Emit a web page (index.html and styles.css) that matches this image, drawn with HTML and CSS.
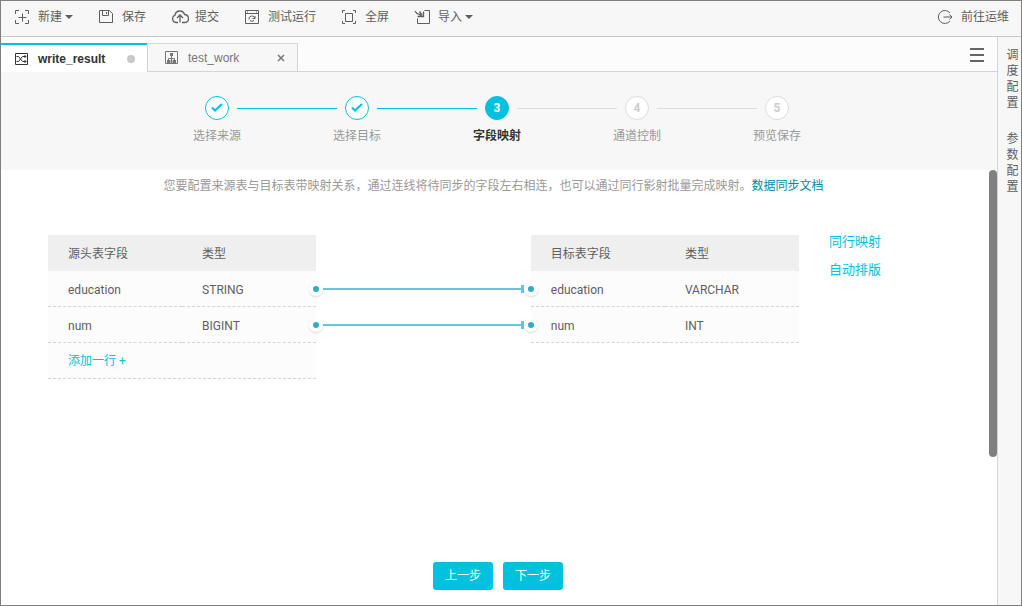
FILE: index.html
```html
<!DOCTYPE html>
<html lang="zh-CN">
<head>
    <meta charset="UTF-8">
    <meta name="viewport" content="width=device-width, initial-scale=1.0">
    <title>write_result</title>
    <link rel="stylesheet" href="styles.css">
</head>
<body>
    <div class="app">
        <header class="toolbar">
            <button class="tool" type="button">
                <svg class="icon" width="16" height="16" viewBox="0 0 16 16"><path d="M5 1.5H1.5V5M11 1.5h3.500V5M5 14.500H1.500V11M11 14.500h3.500V11M8.500 4.500v8M4.500 8.500h8"/></svg>
                <span>新建</span><i class="caret"></i>
            </button>
            <button class="tool" type="button">
                <svg class="icon" width="16" height="16" viewBox="0 0 16 16"><path d="M1.500 1.500h10l3 3v9h-13zM4.500 1.500v5h6v-5M8.500 3v2"/></svg>
                <span>保存</span>
            </button>
            <button class="tool" type="button">
                <svg class="icon icon-wide" width="18" height="16" viewBox="0 0 18 16"><path d="M7 13.500H5A3.800 3.800 0 0 1 4 6.200C4.300 3.500 6.500 2 8.900 2c2.200 0 4 1.300 4.600 3.500 2.500.3 4 1.900 4 4s-1.500 4-4 4H11M9 13.500V6.500M6 9l3-3 3 3" stroke-width="1.300"/></svg>
                <span>提交</span>
            </button>
            <button class="tool" type="button">
                <svg class="icon" width="16" height="16" viewBox="0 0 16 16"><path d="M1.500 1.500h13v13h-13zM1.500 4.500h13M3 3h1M12 3h1M5 10.500a3 3 0 0 1 6-1M11 7v2.500H8.500M6 11.500c1 1 3 1 4 0"/></svg>
                <span>测试运行</span>
            </button>
            <button class="tool" type="button">
                <svg class="icon" width="16" height="16" viewBox="0 0 16 16"><path d="M4 1.500H1.500V4M12 1.500h2.500V4M4 14.500H1.500V12M12 14.500h2.500V12M4.500 4.500h7v8h-7z"/></svg>
                <span>全屏</span>
            </button>
            <button class="tool" type="button">
                <svg class="icon" width="16" height="16" viewBox="0 0 16 16"><path d="M10.500 1.500h5v13h-12V9.500"/><path d="M1 2c1 2 2 3 4 3.200L8 7M9.500 2.500V7.500H3.500M5.500 2.500L8 6" stroke-width="1.300"/></svg>
                <span>导入</span><i class="caret"></i>
            </button>
            <a class="tool tool-right" href="#ops">
                <svg class="icon" width="16" height="16" viewBox="0 0 16 16"><path d="M13 4a6.500 6.500 0 1 0 0 8M6.500 8h8.500M12.500 5.500L15 8l-2.500 2.500"/></svg>
                <span>前往运维</span>
            </a>
        </header>

        <div class="workspace">
            <main class="main">
                <nav class="tabs">
                    <a class="tab active" href="#write_result">
                        <svg class="tab-icon" width="14" height="14" viewBox="0 0 14 14"><path d="M.5 1.500h12v11H.5z"/><path d="M1.500 4.500h2l4 5H11M1.500 9.500h2l4-5H11M9.500 3l1.500 1.500L9.500 6M9.500 8L11 9.500 9.500 11"/></svg>
                        <span class="tab-name">write_result</span>
                        <i class="unsaved"></i>
                    </a>
                    <a class="tab" href="#test_work">
                        <svg class="tab-icon" width="14" height="14" viewBox="0 0 14 14"><path d="M.5.500h12v12H.5zM6.500 5v4M3.500 9V7.500h6V9"/><path class="solid" d="M5 2h3v3H5zM2 9h3v3H2zM5.500 9h2v3h-2zM8 9h3v3H8z"/></svg>
                        <span class="tab-name">test_work</span>
                        <svg class="close" width="8" height="8" viewBox="0 0 8 8"><path d="M1 1l6 6M7 1L1 7"/></svg>
                    </a>
                    <button class="menu" type="button" aria-label="菜单">
                        <svg width="14" height="14" viewBox="0 0 14 14"><path d="M0 1h14M0 7h14M0 13h14"/></svg>
                    </button>
                </nav>

                <ol class="steps">
                    <li class="step done">
                        <span class="circle"><svg width="12" height="10" viewBox="0 0 12 10"><path d="M1 4.500l3 3 7-6.500"/></svg></span>
                        <span class="label">选择来源</span>
                    </li>
                    <li class="bar done"></li>
                    <li class="step done">
                        <span class="circle"><svg width="12" height="10" viewBox="0 0 12 10"><path d="M1 4.500l3 3 7-6.500"/></svg></span>
                        <span class="label">选择目标</span>
                    </li>
                    <li class="bar done"></li>
                    <li class="step current">
                        <span class="circle">3</span>
                        <span class="label">字段映射</span>
                    </li>
                    <li class="bar"></li>
                    <li class="step">
                        <span class="circle">4</span>
                        <span class="label">通道控制</span>
                    </li>
                    <li class="bar"></li>
                    <li class="step">
                        <span class="circle">5</span>
                        <span class="label">预览保存</span>
                    </li>
                </ol>

                <section class="content">
                    <p class="hint">您要配置来源表与目标表带映射关系，通过连线将待同步的字段左右相连，也可以通过同行影射批量完成映射。<a href="#doc">数据同步文档</a></p>

                    <div class="mapping">
                        <table class="fields">
                            <thead>
                                <tr><th>源头表字段</th><th>类型</th></tr>
                            </thead>
                            <tbody>
                                <tr><td>education</td><td>STRING</td></tr>
                                <tr><td>num</td><td>BIGINT</td></tr>
                                <tr><td class="add" colspan="2"><button class="link" type="button">添加一行 +</button></td></tr>
                            </tbody>
                        </table>
                        <div class="wires">
                            <div class="wire"><i class="dot"></i><i class="dot end"></i></div>
                            <div class="wire"><i class="dot"></i><i class="dot end"></i></div>
                        </div>
                        <table class="fields">
                            <thead>
                                <tr><th>目标表字段</th><th>类型</th></tr>
                            </thead>
                            <tbody>
                                <tr><td>education</td><td>VARCHAR</td></tr>
                                <tr><td>num</td><td>INT</td></tr>
                            </tbody>
                        </table>
                        <div class="actions">
                            <a href="#same-row">同行映射</a>
                            <a href="#layout">自动排版</a>
                        </div>
                    </div>

                    <div class="footer">
                        <button class="button" type="button">上一步</button>
                        <button class="button" type="button">下一步</button>
                    </div>
                    <div class="scroll-thumb"></div>
                </section>
            </main>

            <aside class="side">
                <button class="side-tab" type="button">调度配置</button>
                <button class="side-tab" type="button">参数配置</button>
            </aside>
        </div>
    </div>
</body>
</html>
```

FILE: styles.css
```css
:root {
    --primary-color: #00c1de;
    --link-color: #008aa6;
    --wire-color: #5fc7de;
    --text-color: #5f5f5f;
    --muted-color: #999;
    --border-color: #d5d5d5;
    --panel-color: #f7f7f7;
}

* {
    box-sizing: border-box;
}

body {
    margin: 0;
    font-family: Roboto, "Noto Sans CJK SC", sans-serif;
    font-size: 12px;
    line-height: 18px;
    color: var(--text-color);
    background-color: white;
}

button {
    padding: 0;
    border: none;
    background: none;
    font: inherit;
    color: inherit;
    cursor: pointer;
}

a {
    color: inherit;
    text-decoration: none;
}

svg {
    display: block;
    flex: none;
    fill: none;
    stroke: currentColor;
}

.app {
    display: flex;
    flex-direction: column;
    min-height: 100vh;
    border: 1px solid #808080;
}

/* toolbar */
.toolbar {
    display: flex;
    align-items: center;
    gap: 25px;
    height: 36px;
    padding: 0 12px 4px 13px;
    background-color: var(--panel-color);
    border-bottom: 1px solid #c8c8c8;
}

.tool {
    display: flex;
    align-items: center;
    gap: 8px;
    white-space: nowrap;
}

.tool-right {
    margin-left: auto;
}

.icon-wide {
    margin-right: -2px;
}

.caret {
    margin-left: -5px;
    border: 4px solid transparent;
    border-top-color: var(--text-color);
    border-bottom: none;
}

.workspace {
    display: flex;
    flex: 1;
}

.main {
    display: flex;
    flex-direction: column;
    flex: 1;
    min-width: 0;
}

/* tabs */
.tabs {
    display: flex;
    align-items: flex-end;
    height: 35px;
    background-color: #fcfcfc;
    box-shadow: inset 0 -1px var(--border-color);
}

.tab {
    display: flex;
    align-items: center;
    gap: 9px;
    width: 151px;
    height: 29px;
    padding: 0 12px 0 17px;
    font-family: "Liberation Sans", "Noto Sans CJK SC", sans-serif;
    color: #777;
    background-color: var(--panel-color);
    border: 1px solid var(--border-color);
}

.tab.active {
    width: 146px;
    padding-left: 14px;
    color: #333;
    background-color: white;
    border: none;
    border-top: 2px solid var(--primary-color);
}

.tab-name {
    flex: 1;
}

.tab.active .tab-name {
    font-weight: bold;
}

.tab .solid {
    fill: currentColor;
    stroke: none;
}

.unsaved {
    width: 8px;
    height: 8px;
    border-radius: 50%;
    background-color: #c8c8c8;
}

.close {
    stroke-width: 1.5;
}

.menu {
    align-self: center;
    margin-left: auto;
    padding-right: 13px;
    color: #666;
}

.menu svg {
    stroke-width: 2;
}

/* steps */
.steps {
    display: flex;
    justify-content: center;
    margin: 0;
    padding: 24px 4px 25px 0;
    list-style: none;
    background-color: var(--panel-color);
}

.step {
    display: flex;
    flex-direction: column;
    align-items: center;
    gap: 7px;
    width: 40px;
    color: var(--muted-color);
    white-space: nowrap;
}

.circle {
    display: flex;
    align-items: center;
    justify-content: center;
    width: 24px;
    height: 24px;
    border: 1px solid #ddd;
    border-radius: 50%;
    background-color: white;
    color: #ccc;
    font-weight: bold;
}

.circle svg {
    stroke-width: 2;
}

.step.done .circle {
    border-color: var(--primary-color);
    color: var(--primary-color);
}

.step.current {
    color: #333;
    font-weight: bold;
}

.step.current .circle {
    border-color: var(--primary-color);
    background-color: var(--primary-color);
    color: white;
}

.bar {
    width: 100px;
    height: 1px;
    margin-top: 12px;
    background-color: #ddd;
}

.bar.done {
    background-color: var(--primary-color);
}

/* content */
.content {
    position: relative;
    display: flex;
    flex-direction: column;
    flex: 1;
}

.hint {
    margin: 0 0 40px;
    padding: 7px 11px 0 0;
    text-align: center;
    color: var(--muted-color);
}

.hint a {
    color: var(--link-color);
}

.mapping {
    display: grid;
    grid-template-columns: 5fr 4fr 5fr auto;
    align-items: start;
    padding: 0 116px 0 47px;
}

.fields {
    width: 100%;
    table-layout: fixed;
    border-spacing: 0;
    background-color: #fcfcfc;
}

.fields th,
.fields td {
    height: 36px;
    padding: 2px 0 0 20px;
    text-align: left;
    font-weight: normal;
}

.fields th {
    background-color: #efefef;
}

.fields td {
    border-bottom: 1px dashed #d5d5d5;
}

.fields .add {
    padding-top: 0;
}

.link {
    color: var(--primary-color);
}

.wires {
    padding-top: 36px;
}

/* line between two fields, with the stop at its right end */
.wire {
    position: relative;
    height: 36px;
    background:
        linear-gradient(var(--wire-color), var(--wire-color)) right 7px center / 3px 8px no-repeat,
        linear-gradient(var(--wire-color), var(--wire-color)) center / calc(100% - 14px) 2px no-repeat;
}

.dot {
    position: absolute;
    top: 11px;
    left: -7px;
    width: 14px;
    height: 14px;
    border: 4px solid white;
    border-radius: 50%;
    background-color: #31aac8;
    box-shadow: 0 1px 2px rgba(0,0,0,0.15);
}

.dot.end {
    left: auto;
    right: -7px;
}

.actions {
    display: flex;
    flex-direction: column;
    gap: 14px;
    padding-left: 30px;
    font-size: 13px;
    line-height: 14px;
    color: var(--primary-color);
}

.footer {
    display: flex;
    justify-content: center;
    gap: 10px;
    margin-top: auto;
    padding: 15px 2px 15px 0;
}

.button {
    width: 60px;
    height: 28px;
    border-radius: 3px;
    background-color: var(--primary-color);
    color: white;
}

.scroll-thumb {
    position: absolute;
    top: 0;
    right: 0;
    width: 8px;
    height: 66%;
    border-radius: 4px;
    background-color: #808080;
}

/* right side tabs */
.side {
    display: flex;
    flex-direction: column;
    align-items: center;
    gap: 20px;
    width: 24px;
    padding: 10px 0 0 6px;
    background-color: var(--panel-color);
    border-left: 1px solid var(--border-color);
}

.side-tab {
    width: 12px;
    line-height: 16px;
}
```
